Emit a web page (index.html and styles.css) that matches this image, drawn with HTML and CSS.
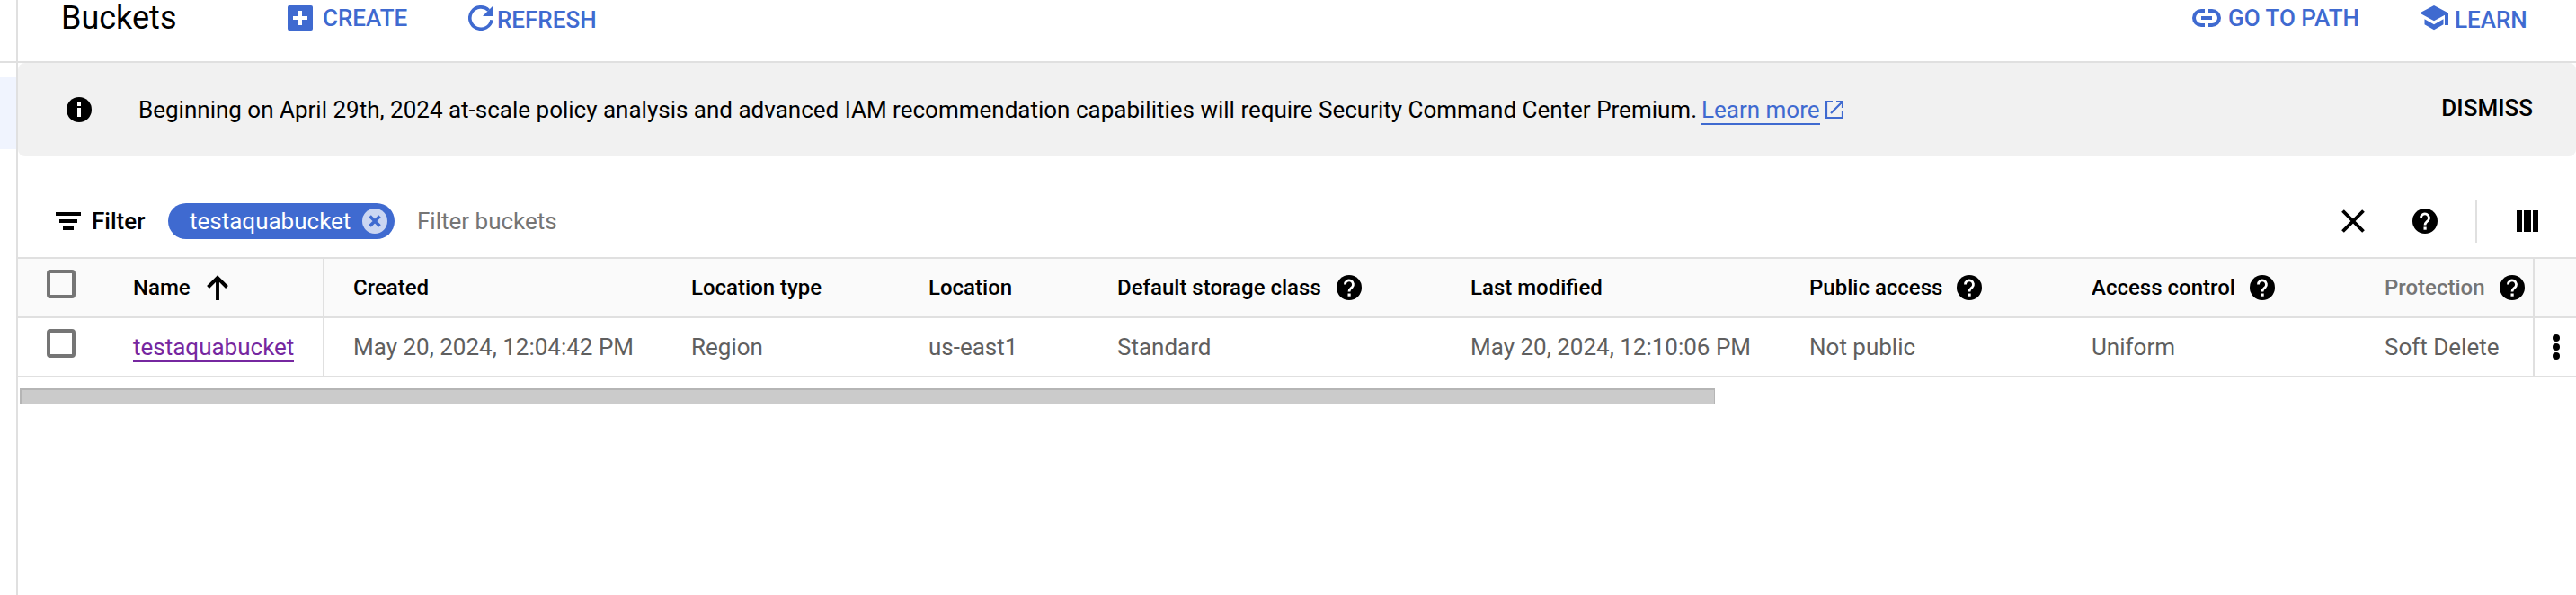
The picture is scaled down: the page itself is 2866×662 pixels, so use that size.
FILE: index.html
```html
<!DOCTYPE html>
<html lang="en">
<head>
<meta charset="utf-8">
<title>Buckets</title>
<link rel="stylesheet" href="styles.css">
</head>
<body>
<svg class="defs" aria-hidden="true">
  <symbol id="help" viewBox="0 0 28 28"><circle cx="14" cy="14" r="14" fill="#000"/><path d="M9.500 10.500a4.500 4.500 0 1 1 7.600 3.200c-1.900 1.700-3.100 2.100-3.100 4.800" fill="none" stroke="#fff" stroke-width="2.800"/><path d="M12.500 20.500h3.200v3.200h-3.200z" fill="#fff"/></symbol>
</svg>
<div class="app">
  <aside class="side"><div class="side-top"></div><div class="side-active"></div></aside>
  <main class="main">
    <header class="topbar">
      <h1 class="title">Buckets</h1>
      <button class="action create"><svg width="28" height="28" viewBox="0 0 28 28"><rect width="28" height="28" rx="2" fill="#3f6ad0"/><path d="M14 6v16M6 14h16" stroke="#fff" stroke-width="4"/></svg><span>CREATE</span></button>
      <button class="action refresh"><svg width="28" height="28" viewBox="0 0 28 28"><path d="M22.700 5.500A12.200 12.200 0 1 0 26 16.200" fill="none" stroke="#3f6ad0" stroke-width="3.600"/><path d="M28 0v12H16z" fill="#3f6ad0"/></svg><span>REFRESH</span></button>
      <span class="spacer"></span>
      <button class="action path"><svg width="32" height="20" viewBox="0 0 32 20"><path d="M14 2h-4a8 8 0 0 0 0 16h4M18 2h4a8 8 0 0 1 0 16h-4" fill="none" stroke="#3f6ad0" stroke-width="4"/><path d="M10 10h12" stroke="#3f6ad0" stroke-width="4"/></svg><span>GO TO PATH</span></button>
      <button class="action learn"><svg width="32" height="28" viewBox="0 0 32 28"><path d="M16 0L0 8.600l16 8.700 12-6.500V22h4V8.600zM5.500 15.300v6L16 27.300l10.500-6v-6L16 21.300z" fill="#3f6ad0"/></svg><span>LEARN</span></button>
    </header>
    <section class="banner">
      <svg class="info" width="28" height="28" viewBox="0 0 28 28"><circle cx="14" cy="14" r="14"/><path d="M12 6h4v4h-4zM12 12h4v10h-4z" fill="#fff"/></svg>
      <p class="message">Beginning on April 29th, 2024 at-scale policy analysis and advanced IAM recommendation capabilities will require Security Command Center Premium.</p>
      <a class="more">Learn more</a>
      <svg class="external" width="20" height="20" viewBox="0 0 20 20"><path d="M8 1H1v18h18v-7M12 1h7v7M19 1L6 14" fill="none" stroke="#3f6ad0" stroke-width="2.200"/></svg>
      <span class="spacer"></span>
      <button class="dismiss">DISMISS</button>
    </section>
    <section class="filterbar">
      <svg class="filter-icon" width="28" height="20" viewBox="0 0 28 20"><path d="M0 0h28v4H0zM4 8h20v4H4zM8 16h12v4H8z"/></svg>
      <span class="filter-label">Filter</span>
      <span class="chip"><span class="chip-text">testaquabucket</span><svg width="28" height="28" viewBox="0 0 28 28"><circle cx="14" cy="14" r="14" fill="#cbd6f2"/><path d="M8.500 8.500l11 11M19.500 8.500l-11 11" stroke="#3f6ad0" stroke-width="3.600"/></svg></span>
      <span class="placeholder">Filter buckets</span>
      <span class="spacer"></span>
      <svg class="clear" width="26" height="26" viewBox="0 0 26 26"><path d="M1.500 1.500l23 23M24.500 1.500l-23 23" stroke="#000" stroke-width="3.800"/></svg>
      <svg class="help-tool" width="28" height="28"><use href="#help"/></svg>
      <span class="divider"></span>
      <svg class="columns" width="24" height="24" viewBox="0 0 24 24"><path d="M0 0h6v24H0zM8 0h8v24H8zM18 0h6v24h-6z"/></svg>
    </section>
    <div class="table">
      <div class="row head">
        <div class="cell check"><span class="box"></span></div>
        <div class="cell name">Name<svg class="sort" width="24" height="28" viewBox="0 0 24 28"><path d="M12 28V3M1.500 13.500L12 3l10.500 10.500" fill="none" stroke="#000" stroke-width="3.900"/></svg></div>
        <div class="cell">Created</div>
        <div class="cell">Location type</div>
        <div class="cell">Location</div>
        <div class="cell storage">Default storage class<svg class="help" width="28" height="28"><use href="#help"/></svg></div>
        <div class="cell">Last modified</div>
        <div class="cell">Public access<svg class="help" width="28" height="28"><use href="#help"/></svg></div>
        <div class="cell">Access control<svg class="help" width="28" height="28"><use href="#help"/></svg></div>
        <div class="cell muted">Protection<svg class="help" width="28" height="28"><use href="#help"/></svg></div>
        <div class="cell menu"></div>
      </div>
      <div class="row">
        <div class="cell check"><span class="box"></span></div>
        <div class="cell name"><a class="bucket">testaquabucket</a></div>
        <div class="cell">May 20, 2024, 12:04:42 PM</div>
        <div class="cell">Region</div>
        <div class="cell">us-east1</div>
        <div class="cell">Standard</div>
        <div class="cell">May 20, 2024, 12:10:06 PM</div>
        <div class="cell">Not public</div>
        <div class="cell">Uniform</div>
        <div class="cell">Soft Delete</div>
        <div class="cell menu"><svg width="8" height="28" viewBox="0 0 8 28"><circle cx="4" cy="4" r="4"/><circle cx="4" cy="14" r="4"/><circle cx="4" cy="24" r="4"/></svg></div>
      </div>
    </div>
    <div class="scrollbar"></div>
  </main>
</div>
</body>
</html>
```
FILE: styles.css
```css
* { box-sizing: border-box; }
html { overflow: hidden; }
body { margin: 0; background: #fff; color: #000; font-family: Roboto, "Liberation Sans", sans-serif; font-size: 26px; line-height: 30px; }
svg { display: block; flex: none; }
.defs { position: absolute; width: 0; height: 0; }
button { margin: 0; padding: 0; border: 0; background: none; font: inherit; color: inherit; }
.app { display: flex; height: 662px; overflow: hidden; }
.side { width: 20px; flex: none; border-right: 2px solid #e0e0e0; }
.side-top { height: 70px; border-bottom: 2px solid #e0e0e0; margin-bottom: 16px; }
.side-active { height: 80px; background: #f0f4fe; }
.main { flex: 1; min-width: 0; white-space: nowrap; }
.spacer { flex: 1; }
.topbar { display: flex; align-items: flex-start; height: 70px; border-bottom: 2px solid #e0e0e0; padding: 0 55px 0 48px; }
.title { margin: 0; width: 252px; font-size: 36px; line-height: 40px; font-weight: 400; }
.action { display: flex; align-items: flex-start; color: #3f6ad0; font-weight: 500; }
.action svg { margin-top: 6px; }
.create span, .path span { margin-top: 5px; }
.refresh span, .learn span { margin-top: 7px; }
.create { width: 201px; gap: 11px; }
.refresh { gap: 4px; }
.path { gap: 8px; width: 253px; }
.action.path svg { margin-top: 10px; }
.learn { gap: 7px; width: 119px; }
.banner { display: flex; align-items: flex-start; height: 104px; background: #f1f1f1; border-radius: 8px; padding: 0 48px 0 54px; }
.info { margin-top: 38px; }
.message { margin: 37px 5px 0 52px; }
.more { margin-top: 37px; height: 32px; color: #3f6ad0; border-bottom: 2px solid #3f6ad0; }
.external { margin: 42px 0 0 6px; }
.dismiss { margin-top: 35px; font-weight: 500; }
.filterbar { display: flex; align-items: center; height: 112px; padding: 32px 42px 0 42px; }
.filter-label { margin-left: 12px; width: 85px; font-weight: 500; }
.chip { display: flex; align-items: center; justify-content: space-between; width: 252px; height: 40px; border-radius: 20px; padding: 0 8px 0 24px; background: #3f6ad0; color: #fff; }
.placeholder { margin-left: 25px; color: #757575; }
.clear { margin-right: 53px; }
.divider { width: 2px; height: 48px; margin: 0 44px 0 42px; background: #e0e0e0; }
.table { border-top: 2px solid #e0e0e0; }
.row { display: grid; grid-template-columns: 96px 245px 376px 264px 210px 393px 377px 314px 326px 197px 48px; height: 66px; border-bottom: 2px solid #e0e0e0; color: #5f5f5f; }
.head { background: #fafafa; color: #000; font-size: 24px; font-weight: 500; }
.cell { display: flex; align-items: center; padding-left: 32px; }
.check { align-items: flex-start; padding-top: 12px; }
.box { width: 32px; height: 32px; border: 4px solid #757575; border-radius: 4px; }
.name { border-right: 2px solid #e0e0e0; }
.sort { margin-left: 18px; }
.help { margin-left: 16px; }
.storage .help { margin-left: 17px; }
.muted { color: #757575; }
.bucket { height: 32px; margin-top: 2px; border-bottom: 2px solid #7627a0; color: #7627a0; }
.menu { padding-left: 20px; border-left: 2px solid #e0e0e0; }
.scrollbar { width: 1886px; height: 18px; margin: 12px 0 0 2px; background: #cbcbcb; border: solid #b5b5b5; border-width: 2px 1px 0 2px; }
```
